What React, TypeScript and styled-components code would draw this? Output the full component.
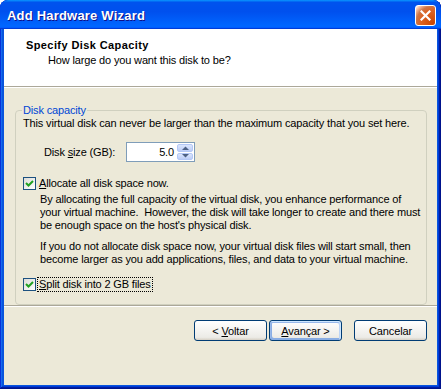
import React from 'react'
import styled, { createGlobalStyle } from 'styled-components'

const GlobalStyle = createGlobalStyle`
  html, body {
    margin: 0;
    padding: 0;
    background: #fff;
  }
  body {
    font-family: 'Liberation Sans', Arial, sans-serif;
    font-size: 11px;
    letter-spacing: -0.15px;
    color: #000;
  }
`

const CheckMark = () => (
  <svg width="9" height="9" viewBox="0 0 9 9">
    <path d="M1 4 L3.5 6.5 L8 2" fill="none" stroke="#21a121" strokeWidth="2" />
  </svg>
)

const Check: React.FC<{ label: React.ReactNode; focused?: boolean }> = ({
  label,
  focused,
}) => (
  <CheckRow>
    <CheckBox>
      <CheckMark />
    </CheckBox>
    <CheckLabel focused={focused}>{label}</CheckLabel>
  </CheckRow>
)

const App: React.FC = () => {
  return (
    <>
      <GlobalStyle />
      <Window>
        <TitleBar>
          <TitleText>Add Hardware Wizard</TitleText>
          <CloseButton>
            <svg width="11" height="11" viewBox="0 0 11 11">
              <path
                d="M1.5 1.5 L9.5 9.5 M9.5 1.5 L1.5 9.5"
                stroke="#fff"
                strokeWidth="2.2"
                strokeLinecap="square"
              />
            </svg>
          </CloseButton>
        </TitleBar>
        <Frame>
          <Header>
            <HeaderTitle>Specify Disk Capacity</HeaderTitle>
            <HeaderSub>How large do you want this disk to be?</HeaderSub>
          </Header>
          <Rule />
          <Main>
            <Group>
              <Legend>Disk capacity</Legend>
              <Text>
                This virtual disk can never be larger than the maximum capacity
                that you set here.
              </Text>
              <SizeRow>
                <SizeLabel>
                  <span>
                    Disk <u>s</u>ize (GB):
                  </span>
                </SizeLabel>
                <SpinBox>
                  <SpinValue>5.0</SpinValue>
                  <SpinButtons>
                    <SpinButton>
                      <svg width="7" height="4" viewBox="0 0 7 4">
                        <path d="M0 4 L3.5 0.5 L7 4 Z" fill="#4d6185" />
                      </svg>
                    </SpinButton>
                    <SpinButton>
                      <svg width="7" height="4" viewBox="0 0 7 4">
                        <path d="M0 0 L3.5 3.5 L7 0 Z" fill="#4d6185" />
                      </svg>
                    </SpinButton>
                  </SpinButtons>
                </SpinBox>
              </SizeRow>
              <Check
                label={
                  <>
                    <u>A</u>llocate all disk space now.
                  </>
                }
              />
              <Note>
                By allocating the full capacity of the virtual disk, you enhance
                performance of
                <br />
                your virtual machine.{'\u00a0 '}However, the disk will take
                longer to create and there must
                <br />
                be enough space on the host's physical disk.
              </Note>
              <Note gap={8}>
                If you do not allocate disk space now, your virtual disk files
                will start small, then
                <br />
                become larger as you add applications, files, and data to your
                virtual machine.
              </Note>
              <Spacer />
              <Check
                focused
                label={
                  <>
                    <u>S</u>plit disk into 2 GB files
                  </>
                }
              />
            </Group>
          </Main>
          <Rule />
          <Footer>
            <Button>
              <span>
                {'< '}
                <u>V</u>oltar
              </span>
            </Button>
            <Button primary>
              <span>
                <u>A</u>
                {'vançar >'}
              </span>
            </Button>
            <Button wide>
              <span>Cancelar</span>
            </Button>
          </Footer>
        </Frame>
      </Window>
    </>
  )
}

const Window = styled.div`
  width: 441px;
  height: 389px;
  box-sizing: border-box;
  display: flex;
  flex-direction: column;
  border-radius: 8px 8px 0 0;
  background: #0855dd;
  box-shadow:
    inset -1px -1px #00138c,
    inset 1px 1px #0831d9,
    inset -2px -2px #001ea0,
    inset 2px 2px #166aee,
    inset -3px -3px #003bda,
    inset 3px 3px #0855dd;
  padding-bottom: 4px;
  overflow: hidden;
`

const TitleBar = styled.div`
  height: 29px;
  flex: none;
  display: flex;
  align-items: center;
  justify-content: space-between;
  padding: 1px 5px 0 7px;
  box-sizing: border-box;
  border-radius: 8px 8px 0 0;
  background: linear-gradient(
    180deg,
    #0997ff,
    #0053ee 8%,
    #0050ee 40%,
    #06f 88%,
    #06f 93%,
    #005bff 95%,
    #003dd7 96%,
    #003dd7
  );
`

const TitleText = styled.span`
  color: #fff;
  font-weight: bold;
  font-size: 13px;
  letter-spacing: 0.2px;
  text-shadow: 1px 1px #0f1089;
`

const CloseButton = styled.div`
  width: 21px;
  height: 21px;
  box-sizing: border-box;
  border: 1px solid #fff;
  border-radius: 3px;
  display: flex;
  align-items: center;
  justify-content: center;
  margin-top: 1px;
  background: radial-gradient(
    circle at 90% 90%,
    #cc4600 0%,
    #dc6527 55%,
    #cd7546 70%,
    #ffccb2 90%,
    #fff 100%
  );
`

const Frame = styled.div`
  flex: 1;
  margin: 0 4px;
  background: #ece9d8;
  display: flex;
  flex-direction: column;
`

const Header = styled.div`
  height: 57px;
  flex: none;
  box-sizing: border-box;
  background: #fff;
  padding: 10px 22px 0;
  line-height: 13px;
`

const HeaderTitle = styled.div`
  font-weight: bold;
  letter-spacing: 0.4px;
`

const HeaderSub = styled.div`
  margin: 2px 0 0 22px;
`

const Rule = styled.div`
  flex: none;
  border-top: 1px solid #aca899;
  border-bottom: 1px solid #fff;
`

const Main = styled.div`
  flex: 1;
  padding: 16px 10px 0 11px;
`

const Group = styled.fieldset`
  margin: 0;
  min-width: 0;
  padding: 0 8px 13px 7px;
  border: 1px solid #d0d0bf;
  border-radius: 4px;
  display: flex;
  flex-direction: column;
  line-height: 13px;
`

const Legend = styled.legend`
  color: #0046d5;
  padding: 0 1px;
  margin-left: -1px;
  line-height: 13px;
`

const Text = styled.div`
  white-space: nowrap;
`

const SizeRow = styled.div`
  display: flex;
  align-items: center;
  margin: 12px 0 15px 21px;
`

const SizeLabel = styled.span`
  width: 82px;
`

const SpinBox = styled.div`
  width: 69px;
  height: 20px;
  box-sizing: border-box;
  border: 1px solid #7f9db9;
  background: #fff;
  display: flex;
  align-items: stretch;
  padding: 1px;
`

const SpinValue = styled.span`
  flex: 1;
  text-align: right;
  padding-right: 3px;
  align-self: center;
`

const SpinButtons = styled.div`
  width: 16px;
  display: flex;
  flex-direction: column;
  gap: 1px;
`

const SpinButton = styled.div`
  flex: 1;
  display: flex;
  align-items: center;
  justify-content: center;
  border: 1px solid #b4c8f6;
  border-radius: 2px;
  background: linear-gradient(180deg, #dbe6fd, #bccdf7);
`

const CheckRow = styled.div`
  display: flex;
  align-items: center;
  height: 13px;
`

const CheckBox = styled.span`
  width: 13px;
  height: 13px;
  box-sizing: border-box;
  flex: none;
  border: 1px solid #1c5180;
  background: linear-gradient(135deg, #dcdcd7, #fff);
  display: flex;
  align-items: center;
  justify-content: center;
`

const CheckLabel = styled.span<{ focused?: boolean }>`
  margin-left: 2px;
  padding: 0 1px;
  outline: ${({ focused }) => (focused ? '1px dotted #000' : 'none')};
  outline-offset: 0;
`

const Note = styled.div<{ gap?: number }>`
  margin: ${({ gap }) => gap ?? 3}px 0 0 17px;
  white-space: nowrap;
`

const Spacer = styled.div`
  height: 12px;
`

const Footer = styled.div`
  flex: 1;
  display: flex;
  justify-content: flex-end;
  align-items: flex-start;
  padding: 13px 10px 0 0;
`

const Button = styled.div<{ primary?: boolean; wide?: boolean }>`
  width: 73px;
  height: 21px;
  box-sizing: border-box;
  margin-left: ${({ wide }) => (wide ? '12px' : '2px')};
  display: flex;
  align-items: center;
  justify-content: center;
  border: 1px solid #003c74;
  border-radius: 3px;
  background: linear-gradient(180deg, #fff, #ecebe6 86%, #d6d0c5);
  box-shadow: ${({ primary }) =>
    primary
      ? 'inset -1px 1px #cee7ff, inset 1px 2px #98b8ea, inset -2px 2px #bcd4f6, inset 1px -1px #89ade4, inset 2px -2px #89ade4'
      : 'none'};
`

export default App
